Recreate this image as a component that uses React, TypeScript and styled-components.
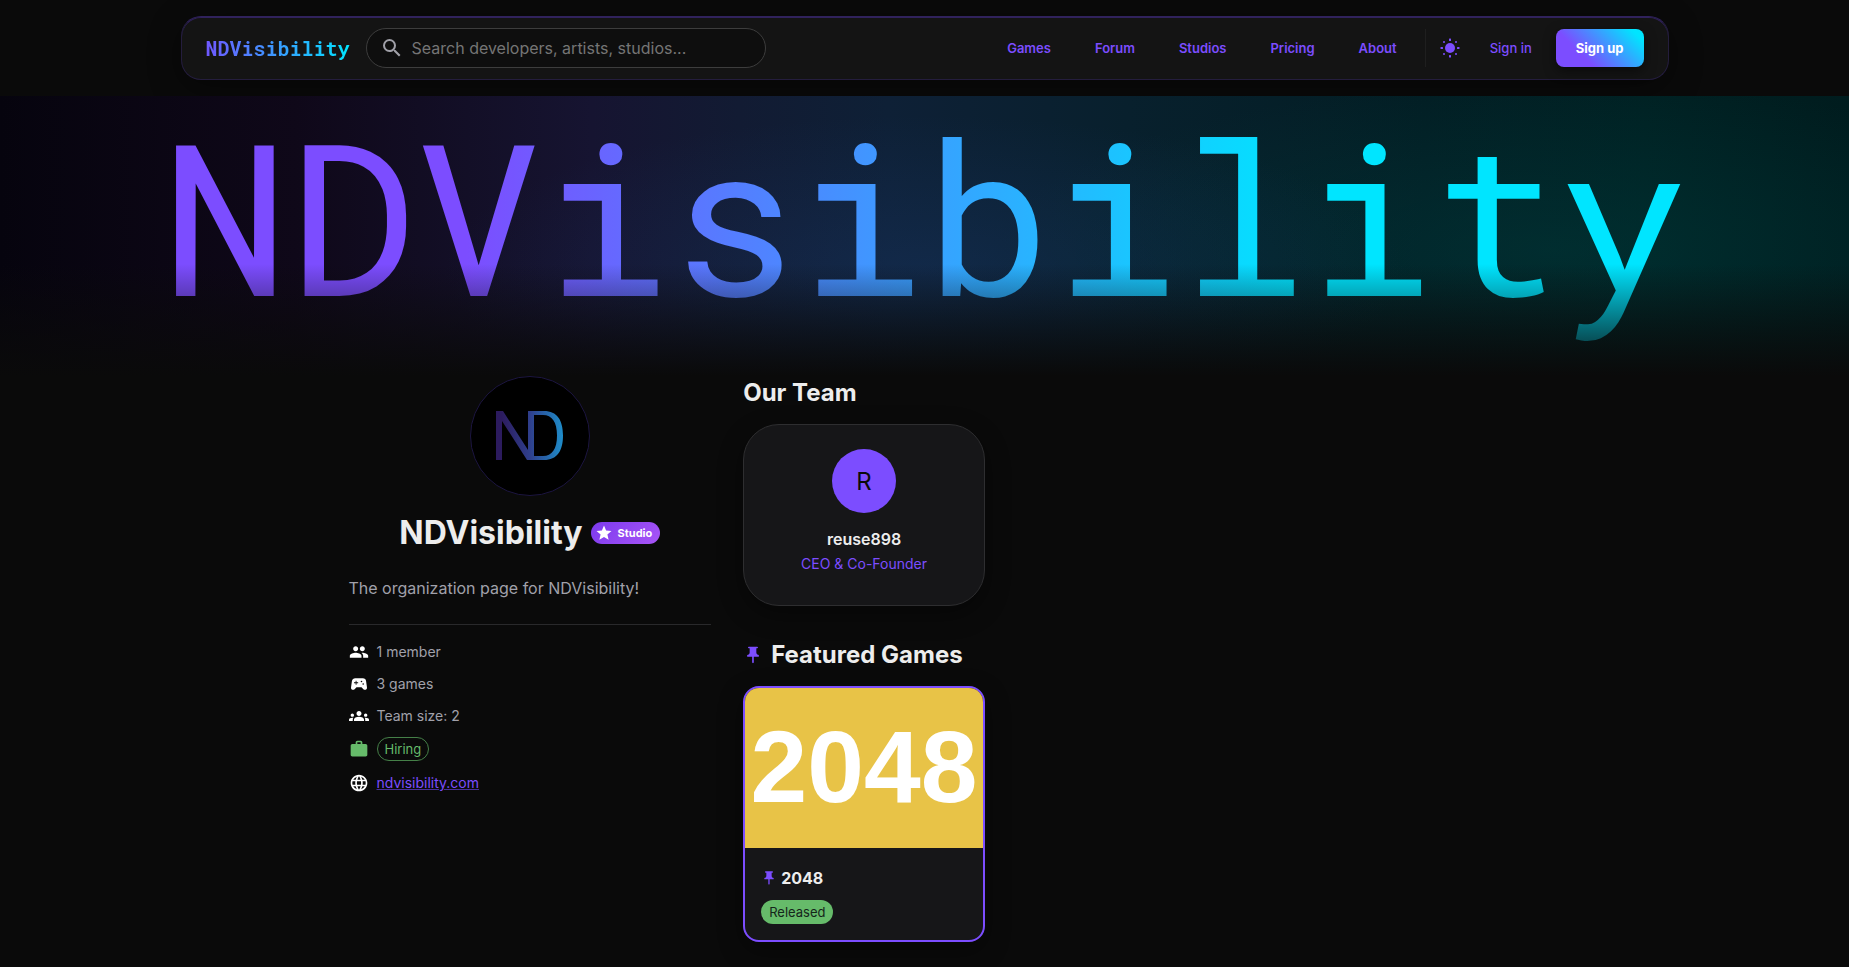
import React from 'react';
import styled, { createGlobalStyle } from 'styled-components';
import {
  MdSearch,
  MdStar,
  MdPeople,
  MdSportsEsports,
  MdGroups,
  MdWork,
  MdLanguage,
  MdPushPin,
} from 'react-icons/md';

const accent = '#7c4dff';
const cyan = '#00e5ff';
const sans = 'Inter, "Liberation Sans", sans-serif';
const mono = '"Roboto Mono", "Liberation Mono", monospace';

const GlobalStyle = createGlobalStyle`
  *, *::before, *::after { box-sizing: border-box; }
  body {
    margin: 0;
    background: #0a0a0a;
    color: #ededed;
    font-family: ${sans};
    font-size: 16px;
    line-height: 24px;
  }
  h1, h2, h3, p, ul { margin: 0; padding: 0; }
  ul { list-style: none; }
  a { color: inherit; text-decoration: none; }
  button, input { font-family: inherit; }
`;

const Header = styled.header`
  max-width: 1536px;
  margin: 0 auto;
  padding: 16px 24px;
`;

const NavBar = styled.div`
  display: flex;
  align-items: center;
  gap: 16px;
  height: 64px;
  padding: 0 24px;
  background: #141414;
  border: 1px solid #241d3d;
  border-top-color: #30225c;
  border-radius: 20px;
  box-shadow: inset 0 1px 0 #30225c, 0 8px 32px rgba(0, 0, 0, 0.4);
`;

const Logo = styled.a`
  font-family: ${mono};
  font-size: 20px;
  font-weight: 700;
  line-height: 32px;
  background: linear-gradient(90deg, #6f58ff, #3f95ff 45%, ${cyan});
  background-clip: text;
  color: transparent;
`;

const SearchBox = styled.label`
  display: flex;
  align-items: center;
  gap: 8px;
  flex: 0 1 400px;
  height: 40px;
  padding: 0 13px;
  background: #0e0e0e;
  border: 1px solid #3d3d3d;
  border-radius: 20px;
  color: #a0a0a8;
`;

const SearchInput = styled.input`
  flex: 1;
  min-width: 0;
  padding: 0;
  border: 0;
  outline: 0;
  background: transparent;
  color: #ededed;
  font-size: 16px;
  &::placeholder { color: #757575; opacity: 1; }
`;

const NavLinks = styled.nav`
  display: flex;
  align-items: center;
  gap: 12px;
  margin-left: auto;
`;

const NavLink = styled.a`
  padding: 0 16px;
  font-size: 13px;
  font-weight: 600;
  line-height: 24px;
  color: ${accent};
`;

const Actions = styled.div`
  display: flex;
  align-items: center;
  height: 38px;
  padding-left: 8px;
  border-left: 1px solid #1f1f1f;
`;

const ThemeButton = styled.button`
  display: flex;
  padding: 0 4px;
  border: 0;
  background: none;
  color: ${accent};
`;

const SignIn = styled(NavLink)`
  padding: 0 24px;
  font-weight: 500;
`;

const SignUp = styled.button`
  height: 38px;
  padding: 0 20px;
  border: 0;
  border-radius: 8px;
  background: linear-gradient(45deg, ${accent} 30%, ${cyan} 90%);
  box-shadow: 0 4px 12px rgba(0, 0, 0, 0.5);
  color: #fff;
  font-size: 13px;
  font-weight: 700;
`;

const Banner = styled.section`
  position: relative;
  display: flex;
  justify-content: center;
  height: 280px;
  background:
    radial-gradient(ellipse 26% 55% at 50% 62%, rgba(26, 58, 110, 0.35), transparent),
    radial-gradient(ellipse 30% 60% at 84% 55%, rgba(0, 66, 66, 0.4), transparent),
    linear-gradient(90deg, #06040e, #0f0819 16%, #161431 32%, #121b33 40%, #0e2036 48%, #08202d 61%, #021e24 77%, #002123 89%, #001c1e);

  &::after {
    content: '';
    position: absolute;
    inset: 0;
    background: linear-gradient(to bottom, rgba(10, 10, 10, 0) 60%, #0a0a0a 100%);
  }
`;

const Wordmark = styled.div`
  font-family: ${mono};
  font-size: clamp(32px, 11.5vw, 212px);
  line-height: 236px;
  white-space: nowrap;
  background: linear-gradient(90deg, ${accent} 20%, ${cyan} 75%);
  background-clip: text;
  color: transparent;
`;

const Main = styled.main`
  display: grid;
  grid-template-columns: calc((100% - 64px) / 3) minmax(0, 1fr);
  gap: 32px;
  max-width: 1200px;
  margin: 0 auto;
  padding: 0 24px 24px;
`;

const Sidebar = styled.aside`
  display: flex;
  flex-direction: column;
`;

const StudioLogo = styled.div`
  align-self: center;
  width: 120px;
  height: 120px;
  border: 1px solid #1c1540;
  border-radius: 50%;
  background: #000;
`;

const TitleRow = styled.div`
  display: flex;
  align-items: center;
  justify-content: center;
  gap: 8px;
  margin-top: 16px;
`;

const StudioName = styled.h1`
  font-size: 32px;
  font-weight: 700;
  line-height: 41px;
`;

const StudioBadge = styled.span`
  display: flex;
  align-items: center;
  gap: 5px;
  height: 22px;
  padding: 0 8px 0 4px;
  border-radius: 11px;
  background: linear-gradient(135deg, #7c3aed, #a855f7);
  color: #fff;
  font-size: 11px;
  font-weight: 700;
`;

const Description = styled.p`
  margin: 23px 0 24px;
  color: #a1a1aa;
`;

const Facts = styled.ul`
  display: flex;
  flex-direction: column;
  gap: 11px;
  padding-top: 16px;
  border-top: 1px solid #29292b;
`;

const Fact = styled.li<{ $icon?: string }>`
  display: flex;
  align-items: center;
  gap: 8px;
  font-size: 14px;
  line-height: 21px;
  color: #a1a1aa;
  svg { color: ${(p) => p.$icon || '#fff'}; }
`;

const Chip = styled.span<{ $filled?: boolean }>`
  display: inline-flex;
  align-items: center;
  align-self: flex-start;
  height: 24px;
  padding: 0 ${(p) => (p.$filled ? 8 : 7)}px;
  border: ${(p) => (p.$filled ? '0' : '1px solid #458048')};
  border-radius: 12px;
  background: ${(p) => (p.$filled ? '#66bb6a' : 'transparent')};
  color: ${(p) => (p.$filled ? '#15251a' : '#66bb6a')};
  font-size: 13px;
`;

const SiteLink = styled.a`
  color: ${accent};
  text-decoration: underline;
  text-decoration-color: #49309a;
`;

const Content = styled.div`
  display: flex;
  flex-direction: column;
`;

const SectionTitle = styled.h2`
  display: flex;
  align-items: center;
  gap: 8px;
  margin-bottom: 14px;
  font-size: 24px;
  font-weight: 700;
  line-height: 34px;
  svg { color: ${accent}; }
`;

const CardGrid = styled.div`
  display: grid;
  grid-template-columns: repeat(3, minmax(0, 1fr));
  gap: 16px;
  margin-bottom: 32px;
`;

const MemberCard = styled.article`
  display: flex;
  flex-direction: column;
  align-items: center;
  padding: 24px 24px 22px;
  border: 1px solid #2e2e30;
  border-radius: 36px;
  background: #161618;
  box-shadow: 0 8px 24px rgba(0, 0, 0, 0.4);
`;

const Avatar = styled.div`
  display: flex;
  align-items: center;
  justify-content: center;
  width: 64px;
  height: 64px;
  margin-bottom: 12px;
  padding-top: 1px;
  border-radius: 50%;
  background: ${accent};
  color: #0a0a0a;
  font-size: 24px;
`;

const MemberName = styled.h3`
  font-size: 16px;
  font-weight: 600;
  line-height: 28px;
`;

const MemberRole = styled.p`
  margin-bottom: 8px;
  font-size: 14px;
  line-height: 22px;
  color: ${accent};
`;

const GameCard = styled.article`
  overflow: hidden;
  border: 2px solid ${accent};
  border-radius: 16px;
  background: #161618;
  box-shadow: 0 8px 24px rgba(0, 0, 0, 0.4);
`;

const GameCover = styled.div`
  display: flex;
  justify-content: center;
  height: 160px;
  background: #e8c347;
  color: #fff;
  font-family: "Liberation Sans", Arial, sans-serif;
  font-size: 102px;
  font-weight: 700;
  line-height: 158px;
`;

const GameInfo = styled.div`
  display: flex;
  flex-direction: column;
  gap: 8px;
  padding: 16px;
`;

const GameTitle = styled.h3`
  display: flex;
  align-items: center;
  gap: 4px;
  font-size: 16px;
  font-weight: 700;
  line-height: 28px;
  svg { color: ${accent}; }
`;

function SunIcon() {
  return (
    <svg width="24" height="24" viewBox="0 0 24 24" fill="currentColor" aria-hidden="true">
      <circle cx="12" cy="12" r="5" />
      <rect x="11" y="2.500" width="2" height="2.500" rx="0.500" />
      <rect x="11" y="19" width="2" height="2.500" rx="0.500" />
      <rect x="2.500" y="11" width="2.500" height="2" rx="0.500" />
      <rect x="19" y="11" width="2.500" height="2" rx="0.500" />
      <circle cx="6" cy="6" r="1" />
      <circle cx="18" cy="6" r="1" />
      <circle cx="6" cy="18" r="1" />
      <circle cx="18" cy="18" r="1" />
    </svg>
  );
}

function Monogram() {
  return (
    <svg width="118" height="118" viewBox="0 0 118 118" role="img" aria-label="NDVisibility logo">
      <defs>
        <linearGradient id="nd" gradientUnits="userSpaceOnUse" x1="25" y1="0" x2="93" y2="0">
          <stop offset="0.08" stopColor="#2c1b5e" />
          <stop offset="0.5" stopColor="#2f3f8c" />
          <stop offset="1" stopColor="#1e90cc" />
        </linearGradient>
      </defs>
      <path
        fill="url(#nd)"
        fillRule="evenodd"
        d="M25 34h7l25 39V34h16c13 0 19 9 19 24.500S86 83 73 83H56L31 44v39h-6z M63 38v41h9c9 0 14-7 14-20.500S81 38 72 38z"
      />
    </svg>
  );
}

export default function App() {
  return (
    <>
      <GlobalStyle />
      <Header>
        <NavBar>
          <Logo href="#">NDVisibility</Logo>
          <SearchBox>
            <MdSearch size={24} aria-hidden="true" />
            <SearchInput type="text" aria-label="Search" placeholder="Search developers, artists, studios..." />
          </SearchBox>
          <NavLinks>
            {['Games', 'Forum', 'Studios', 'Pricing', 'About'].map((name) => (
              <NavLink key={name} href="#">{name}</NavLink>
            ))}
            <Actions>
              <ThemeButton type="button" aria-label="Switch theme"><SunIcon /></ThemeButton>
              <SignIn href="#">Sign in</SignIn>
              <SignUp type="button">Sign up</SignUp>
            </Actions>
          </NavLinks>
        </NavBar>
      </Header>
      <Banner>
        <Wordmark>NDVisibility</Wordmark>
      </Banner>
      <Main>
        <Sidebar>
          <StudioLogo><Monogram /></StudioLogo>
          <TitleRow>
            <StudioName>NDVisibility</StudioName>
            <StudioBadge><MdStar size={18} aria-hidden="true" />Studio</StudioBadge>
          </TitleRow>
          <Description>The organization page for NDVisibility!</Description>
          <Facts>
            <Fact><MdPeople size={20} aria-hidden="true" />1 member</Fact>
            <Fact><MdSportsEsports size={20} aria-hidden="true" />3 games</Fact>
            <Fact><MdGroups size={20} aria-hidden="true" />Team size: 2</Fact>
            <Fact $icon="#66bb6a"><MdWork size={20} aria-hidden="true" /><Chip>Hiring</Chip></Fact>
            <Fact><MdLanguage size={20} aria-hidden="true" /><SiteLink href="#">ndvisibility.com</SiteLink></Fact>
          </Facts>
        </Sidebar>
        <Content>
          <SectionTitle>Our Team</SectionTitle>
          <CardGrid>
            <MemberCard>
              <Avatar>R</Avatar>
              <MemberName>reuse898</MemberName>
              <MemberRole>CEO &amp; Co-Founder</MemberRole>
            </MemberCard>
          </CardGrid>
          <SectionTitle><MdPushPin size={20} aria-hidden="true" />Featured Games</SectionTitle>
          <CardGrid>
            <GameCard>
              <GameCover>2048</GameCover>
              <GameInfo>
                <GameTitle><MdPushPin size={16} aria-hidden="true" />2048</GameTitle>
                <Chip $filled>Released</Chip>
              </GameInfo>
            </GameCard>
          </CardGrid>
        </Content>
      </Main>
    </>
  );
}
